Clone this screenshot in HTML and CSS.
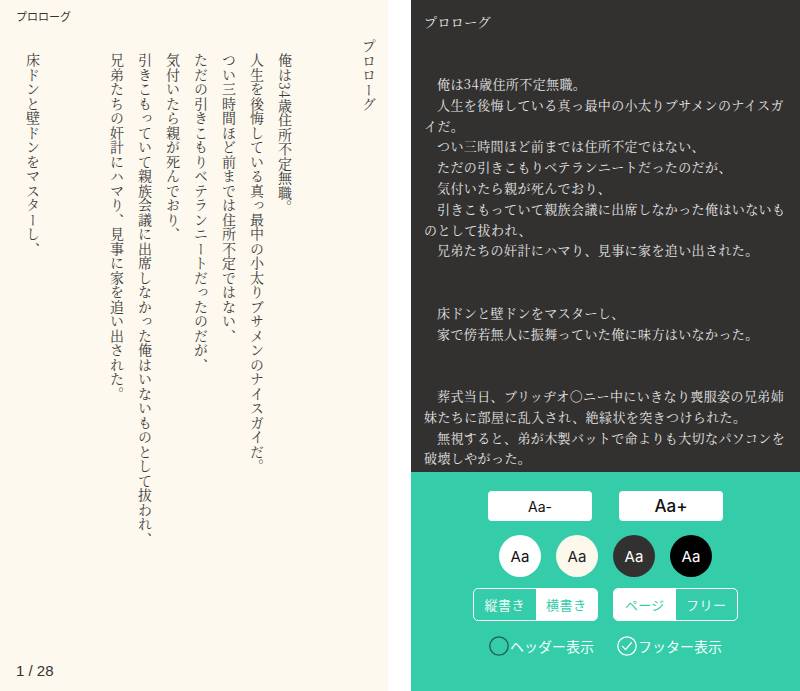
FILE: index.html
```html
<!DOCTYPE html>
<html lang="ja">
<head>
<meta charset="utf-8">
<title>プロローグ</title>
<link rel="stylesheet" href="styles.css">
</head>
<body>
<div class="screen">
  <section class="page page-tate">
    <header class="run-head">プロローグ</header>
    <div class="tate">
      <h1 class="chapter">プロローグ</h1>
      <div class="block">
        <p>俺は34歳住所不定無職。</p>
        <p>人生を後悔している真っ最中の小太りブサメンのナイスガイだ。</p>
        <p>つい三時間ほど前までは住所不定ではない、</p>
        <p>ただの引きこもりベテランニートだったのだが、</p>
        <p>気付いたら親が死んでおり、</p>
        <p>引きこもっていて親族会議に出席しなかった俺はいないものとして拔われ、</p>
        <p>兄弟たちの奸計にハマり、見事に家を追い出された。</p>
      </div>
      <div class="block">
        <p>床ドンと壁ドンをマスターし、</p>
      </div>
    </div>
    <footer class="folio">1 / 28</footer>
  </section>

  <section class="page page-yoko">
    <div class="yoko">
      <h1 class="chapter">プロローグ</h1>
      <div class="block">
        <p>俺は34歳住所不定無職。</p>
        <p>人生を後悔している真っ最中の小太りブサメンのナイスガイだ。</p>
        <p>つい三時間ほど前までは住所不定ではない、</p>
        <p>ただの引きこもりベテランニートだったのだが、</p>
        <p>気付いたら親が死んでおり、</p>
        <p>引きこもっていて親族会議に出席しなかった俺はいないものとして拔われ、</p>
        <p>兄弟たちの奸計にハマり、見事に家を追い出された。</p>
      </div>
      <div class="block">
        <p>床ドンと壁ドンをマスターし、</p>
        <p>家で傍若無人に振舞っていた俺に味方はいなかった。</p>
      </div>
      <div class="block">
        <p>葬式当日、ブリッヂオ○ニー中にいきなり喪服姿の兄弟姉妹たちに部屋に乱入され、絶縁状を突きつけられた。</p>
        <p>無視すると、弟が木製バットで命よりも大切なパソコンを破壊しやがった。</p>
      </div>
    </div>

    <div class="settings">
      <div class="row row-size">
        <button class="btn btn-small">Aa-</button>
        <button class="btn btn-large">Aa+</button>
      </div>
      <div class="row row-theme">
        <button class="swatch swatch-white">Aa</button>
        <button class="swatch swatch-cream">Aa</button>
        <button class="swatch swatch-dark">Aa</button>
        <button class="swatch swatch-black">Aa</button>
      </div>
      <div class="row row-mode">
        <div class="seg">
          <button class="seg-item">縦書き</button>
          <button class="seg-item is-active">横書き</button>
        </div>
        <div class="seg">
          <button class="seg-item is-active">ページ</button>
          <button class="seg-item">フリー</button>
        </div>
      </div>
      <div class="row row-toggle">
        <label class="toggle">
          <svg class="toggle-icon" viewBox="0 0 20 20" width="20" height="20">
            <circle cx="10" cy="10" r="9.2" fill="none" stroke="#235d4f" stroke-width="1.3"/>
          </svg>
          <span>ヘッダー表示</span>
        </label>
        <label class="toggle">
          <svg class="toggle-icon" viewBox="0 0 20 20" width="20" height="20">
            <circle cx="10" cy="10" r="9.2" fill="none" stroke="#ffffff" stroke-width="1.3"/>
            <path d="M5.6 10.4 L8.6 13.6 L14.4 6.6" fill="none" stroke="#ffffff" stroke-width="1.3" stroke-linecap="round" stroke-linejoin="round"/>
          </svg>
          <span>フッター表示</span>
        </label>
      </div>
    </div>
  </section>
</div>
</body>
</html>
```

FILE: styles.css
```css
html, body {
  margin: 0;
  padding: 0;
  background: #ffffff;
}

.screen {
  width: 800px;
  height: 691px;
  display: flex;
  column-gap: 23px;
  overflow: hidden;
}

.page {
  height: 691px;
  box-sizing: border-box;
  display: flex;
  flex-direction: column;
}

/* ---------- vertical (tategaki) page ---------- */
.page-tate {
  width: 388px;
  flex: 0 0 388px;
  background: #fdf9ef;
  padding: 10px 0 0 16px;
}

.run-head {
  font-family: "Noto Sans CJK JP", sans-serif;
  font-size: 11px;
  line-height: 13px;
  color: #333333;
}

.tate {
  writing-mode: vertical-rl;
  flex: 0 0 560px;
  margin-top: 16px;
  padding-right: 5px;
  overflow: hidden;
  font-family: "Noto Serif CJK JP", "Liberation Serif", "Noto Sans CJK JP", serif;
  font-size: 14px;
  letter-spacing: 0.5px;
  line-height: 28px;
  color: #3a3a3a;
}

.chapter {
  margin: 0;
  font: inherit;
}

.tate .block {
  margin-block-start: 56px;
}

p {
  margin: 0;
  text-indent: 1em;
}

.folio {
  margin-top: auto;
  padding-bottom: 11px;
  font-family: "Liberation Sans", Arial, sans-serif;
  font-size: 15px;
  line-height: 18px;
  color: #333333;
}

/* ---------- horizontal page (dark) ---------- */
.page-yoko {
  flex: 1 1 auto;
  background: #323130;
}

.yoko {
  flex: 0 0 472px;
  box-sizing: border-box;
  padding: 11.6px 10px 0 13px;
  overflow: hidden;
  font-family: "Noto Serif CJK JP", "Liberation Serif", "Noto Sans CJK JP", serif;
  font-size: 13px;
  letter-spacing: 0.4px;
  line-height: 20.8px;
  color: #e6e6e6;
}

.yoko .chapter {
  margin-bottom: 41.6px;
}

.yoko .block + .block {
  margin-top: 41.6px;
}

/* ---------- settings sheet ---------- */
.settings {
  flex: 1 1 auto;
  background: #34cca9;
  display: flex;
  flex-direction: column;
  align-items: center;
  padding-top: 19px;
}

.row {
  display: flex;
}

button {
  margin: 0;
  padding: 0;
  border: 0;
  cursor: pointer;
}

.row-size {
  gap: 27px;
}

.btn {
  width: 104px;
  height: 30px;
  background: #ffffff;
  border-radius: 4px;
  font-family: Inter, "Noto Sans", sans-serif;
  color: #111111;
}

.btn-small {
  font-size: 14px;
  font-weight: 400;
}

.btn-large {
  font-size: 17px;
  font-weight: 500;
}

.row-theme {
  margin-top: 14px;
  gap: 15px;
}

.swatch {
  width: 42px;
  height: 42px;
  border-radius: 50%;
  font-family: Inter, "Noto Sans", sans-serif;
  font-size: 15px;
}

.swatch-white { background: #ffffff; color: #111111; }
.swatch-cream { background: #fdf8ec; color: #222222; }
.swatch-dark  { background: #333130; color: #ffffff; }
.swatch-black { background: #000000; color: #ffffff; }

.row-mode {
  margin-top: 11px;
  gap: 15px;
}

.seg {
  width: 125px;
  height: 33px;
  box-sizing: border-box;
  border: 1.5px solid #ffffff;
  border-radius: 5px;
  overflow: hidden;
  display: flex;
}

.seg-item {
  flex: 1 1 0;
  background: transparent;
  color: #eafaf5;
  font-family: "Noto Sans CJK JP", sans-serif;
  font-size: 13px;
  letter-spacing: 0.5px;
}

.seg-item.is-active {
  background: #ffffff;
  color: #34cca9;
}

.row-toggle {
  margin-top: 15px;
  gap: 23px;
}

.toggle {
  display: flex;
  align-items: center;
  gap: 1px;
  font-family: "Noto Sans CJK JP", sans-serif;
  font-size: 14px;
  line-height: 20px;
  color: #f4fffb;
}

.toggle-icon {
  display: block;
  flex: 0 0 auto;
}
```
